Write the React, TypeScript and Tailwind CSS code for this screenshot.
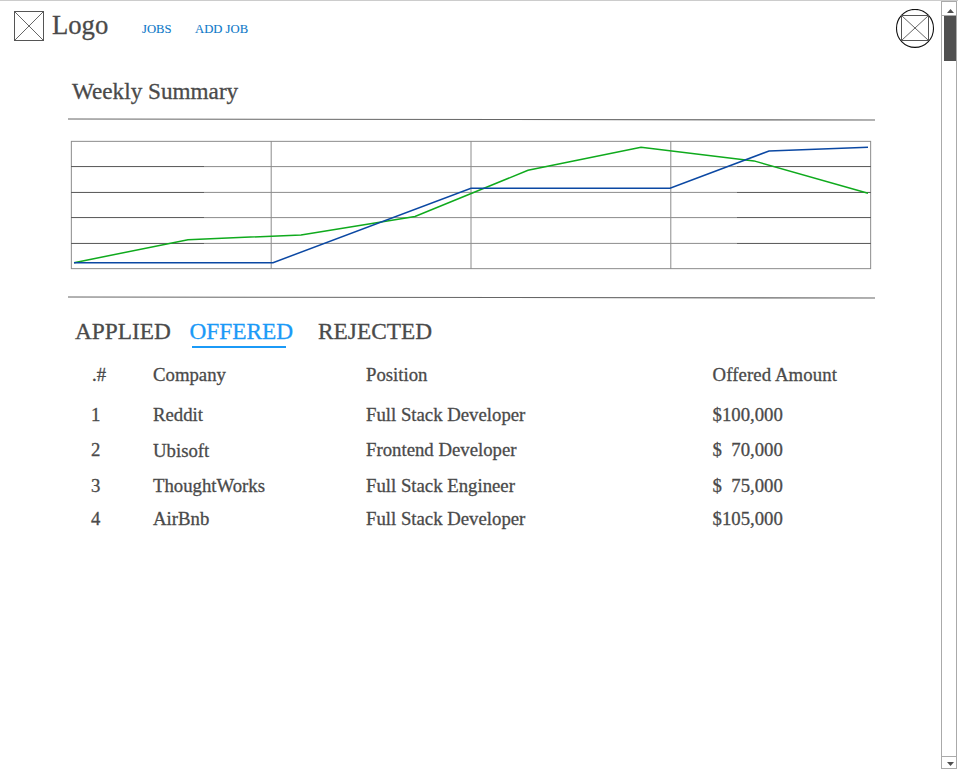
import React from "react";

const columns = "grid grid-cols-[61px_213px_346.5px_160px] pl-[92px]";

const jobs = [
  { id: "1", company: "Reddit", position: "Full Stack Developer", amount: "$100,000", height: "h-[35px]" },
  { id: "2", company: "Ubisoft", position: "Frontend Developer", amount: "$  70,000", height: "h-[36px]" },
  { id: "3", company: "ThoughtWorks", position: "Full Stack Engineer", amount: "$  75,000", height: "h-[33px]" },
  { id: "4", company: "AirBnb", position: "Full Stack Developer", amount: "$105,000", height: "h-[33px]" },
];

function Divider() {
  return (
    <svg className="ml-[68px] block" width="807" height="4" viewBox="0 0 807 4">
      <line x1="0" y1="1" x2="807" y2="2" stroke="#666" strokeWidth="1.1" />
    </svg>
  );
}

// Grid of five rows and four columns under the two weekly series.
function Chart() {
  return (
    <svg className="ml-[70px] block" width="802" height="130" viewBox="70 140 802 130" fill="none">
      <g stroke="#8c8c8c">
        <rect x="71.35" y="141.35" width="799.3" height="127.3" />
        <path d="M71 166.6H871M71 192.4H871M71 217.6H871M71 243.4H871" />
        <path d="M271.2 141V269M471 141V269M670.8 141V269" />
      </g>
      <path
        stroke="#606060"
        d="M71 166.5H204M71 192.5H204M71 217.5H204M71 243.5H204M737 166.5H871M737 192.5H871M737 217.5H871M737 243.5H871"
      />
      <polyline
        stroke="#0faa1d"
        strokeWidth="1.5"
        points="74,262.7 188,239.7 301,235 415,216.5 528,170.3 641,147.3 754,160.9 868,193.3"
      />
      <polyline
        stroke="#0b48a3"
        strokeWidth="1.5"
        points="74,262.7 273,262.7 471,188.2 670,188.2 769,151 868,147.2"
      />
    </svg>
  );
}

function Scrollbar() {
  return (
    <aside className="flex h-[768px] w-4 flex-col border-x border-[#aaa]">
      <div className="flex h-[15px] shrink-0 items-center justify-center border-y border-[#aaa] pl-[3px] pt-1">
        <svg width="7" height="4" viewBox="0 0 7 4">
          <path d="M3.5 0L7 4H0Z" fill="#505050" />
        </svg>
      </div>
      <div className="ml-0.5 h-[45px] bg-[#505050]" />
      <div className="flex-1" />
      <div className="flex h-[13px] items-center justify-center border-y border-[#aaa] pl-[3px] pt-0.5">
        <svg width="7" height="4" viewBox="0 0 7 4">
          <path d="M0 0H7L3.5 4Z" fill="#505050" />
        </svg>
      </div>
    </aside>
  );
}

export default function App() {
  return (
    <div className="flex h-[772px] w-[958px] overflow-hidden border-t border-[#ccc] bg-white font-['Liberation_Serif',serif] text-[#4a4a4a] [-webkit-text-stroke:0.3px]">
      <main className="w-[941px] shrink-0">
        <header className="flex h-[60px] items-start">
          <svg className="ml-3.5 mt-2.5" width="30" height="30" viewBox="0 0 30 30" fill="none" stroke="#555">
            <rect x=".5" y=".5" width="29" height="29" />
            <path d="M1 1L29 29M29 1L1 29" strokeWidth=".9" />
          </svg>
          <span className="ml-2 mt-[9px] w-[90px] text-[26.67px] leading-[30px]">Logo</span>
          <nav className="mt-[18px] flex text-[12.67px] leading-5 text-[#0d78c8] [-webkit-text-stroke:0.1px]">
            <a className="w-[53px]">JOBS</a>
            <a className="w-[60px]">ADD JOB</a>
          </nav>
          <svg className="ml-auto mr-1.5 mt-2" width="40" height="40" viewBox="0 0 40 40" fill="none">
            <ellipse cx="20" cy="19.4" rx="18.5" ry="19" stroke="#111" strokeWidth="1.1" />
            <rect x="6.5" y="6.5" width="27" height="25" stroke="#555" />
            <path d="M7 7L33 31M33 7L7 31" stroke="#666" />
          </svg>
        </header>
        <h1 className="ml-[72px] mt-[15px] h-[42px] text-[23.2px] leading-[30px]">Weekly Summary</h1>
        <Divider />
        <div className="mt-[18px]">
          <Chart />
        </div>
        <div className="mt-[26px]">
          <Divider />
        </div>
        <div className="mt-[16px] flex pl-[75px] text-[23.33px] leading-[30px]">
          <span className="w-[114.5px]">APPLIED</span>
          <div className="w-[128.5px] text-[#1b9af7]">
            <div className="h-[30px]">OFFERED</div>
            <div className="ml-[2.5px] h-0.5 w-[94px] bg-[#1b9af7]" />
          </div>
          <span>REJECTED</span>
        </div>
        <div className="mt-[17px] whitespace-pre text-[18.75px] leading-5">
          <div className={`${columns} h-10`}>
            <span>.#</span>
            <span>Company</span>
            <span>Position</span>
            <span className="tracking-[0.1px]">Offered Amount</span>
          </div>
          {jobs.map((job) => (
            <div key={job.id} className={`${columns} ${job.height}`}>
              <span className="-ml-px">{job.id}</span>
              <span className={job.id === "2" ? "pt-px" : ""}>{job.company}</span>
              <span>{job.position}</span>
              <span>{job.amount}</span>
            </div>
          ))}
        </div>
      </main>
      <Scrollbar />
    </div>
  );
}
